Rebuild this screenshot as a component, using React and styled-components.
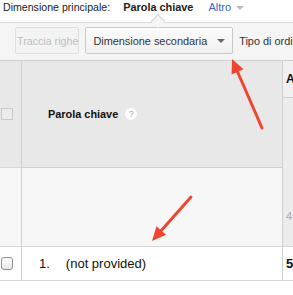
import React from "react";
import styled, { createGlobalStyle } from "styled-components";

const Global = createGlobalStyle`
  html, body { margin: 0; padding: 0; background: #fff; }
  body { width: 293px; height: 295px; overflow: hidden; font-family: "Liberation Sans", Arial, sans-serif; color: #222; }
`;

const Page = styled.div`
  position: relative;
  width: 293px;
  height: 295px;
  overflow: hidden;
`;

const Nav = styled.div`
  height: 22px;
  display: flex;
  align-items: flex-start;
  padding: 1px 0 0 3px;
  box-sizing: border-box;
  font-size: 10.6px;
  line-height: 13px;
  white-space: nowrap;
`;

const NavLabel = styled.span`
  color: #222;
`;

const NavCurrent = styled.span`
  position: relative;
  margin-left: 13px;
  font-weight: bold;
  font-size: 10.9px;
  color: #222;
`;

const Notch = styled.span`
  position: absolute;
  left: 30px;
  top: 15px;
  width: 9px;
  height: 9px;
  background: #f5f5f5;
  border-left: 1px solid #d4d4d4;
  border-top: 1px solid #d4d4d4;
  transform: rotate(45deg);
`;

const NavMore = styled.span`
  margin-left: 15px;
  color: #3366cc;
  font-size: 11px;
  display: flex;
  align-items: center;
  gap: 5px;
`;

const Caret = styled.span`
  display: inline-block;
  width: 0;
  height: 0;
  border-left: 4px solid transparent;
  border-right: 4px solid transparent;
  border-top: 4px solid ${(p) => p.$color || "#bbb"};
`;

const Toolbar = styled.div`
  height: 39px;
  box-sizing: border-box;
  border-top: 1px solid #dcdcdc;
  border-bottom: 1px solid #cfcfcf;
  background: #f5f5f5;
  display: flex;
  align-items: flex-start;
  padding: 4px 0 0 15px;
  gap: 6px;
  white-space: nowrap;
  font-size: 10.9px;
`;

const Button = styled.div`
  height: 27px;
  box-sizing: border-box;
  border: 1px solid ${(p) => (p.$disabled ? "#dedede" : "#c8c8c8")};
  border-radius: 2px;
  background: ${(p) => (p.$disabled ? "#f3f3f3" : "linear-gradient(#fbfbfb, #f1f1f1)")};
  color: ${(p) => (p.$disabled ? "#bdbdbd" : "#333")};
  font-size: ${(p) => (p.$disabled ? "10.7px" : "10.9px")};
  display: flex;
  align-items: center;
  padding: 0 ${(p) => (p.$disabled ? "0" : "7px")} 0 ${(p) => (p.$disabled ? "1px" : "7px")};
  gap: 10px;
  flex-shrink: 0;
`;

const ToolText = styled.div`
  height: 27px;
  display: flex;
  align-items: center;
  color: #333;
`;

const Table = styled.div`
  display: grid;
  grid-template-columns: 22px 261px 1fr;
`;

const Cell = styled.div`
  box-sizing: border-box;
  border-right: ${(p) => (p.$last ? "none" : "1px solid #d0d0d0")};
  border-bottom: 1px solid ${(p) => p.$line || "#d6d6d6"};
  background: ${(p) => p.$bg || "#fff"};
  height: ${(p) => p.$h}px;
  display: flex;
  align-items: ${(p) => p.$align || "center"};
  padding-left: ${(p) => p.$pad || 0}px;
  white-space: nowrap;
  overflow: hidden;
`;

const Stack = styled.div`
  display: flex;
  flex-direction: column;
  height: ${(p) => p.$h}px;
`;

const HeaderBox = styled.span`
  width: 12px;
  height: 12px;
  margin-left: 1px;
  box-sizing: border-box;
  border: 1px solid #c9c9c9;
  background: #ececec;
`;

const RowBox = styled.span`
  width: 12px;
  height: 13px;
  margin-left: 1px;
  box-sizing: border-box;
  border: 1px solid #8f8f8f;
  border-radius: 3px;
  background: linear-gradient(#ffffff, #e8e8e8);
`;

const HeadTitle = styled.span`
  font-weight: bold;
  font-size: 10.9px;
  color: #111;
`;

const Help = styled.span`
  width: 12px;
  height: 12px;
  border-radius: 50%;
  background: #fff;
  color: #aaa;
  font-size: 9px;
  line-height: 12px;
  text-align: center;
  margin-left: 7px;
`;

const RowText = styled.span`
  font-size: 13px;
  color: #111;
  margin-right: ${(p) => p.$gap || 0}px;
`;

const MetricHead = styled.span`
  font-weight: bold;
  font-size: 12px;
  color: #111;
  padding-left: 3px;
`;

const Faint = styled.span`
  font-size: 11px;
  color: #aaa;
  padding-left: 3px;
  margin-top: 42px;
`;

const Arrows = styled.svg`
  position: absolute;
  left: 0;
  top: 0;
  pointer-events: none;
`;

function Arrow({ x1, y1, x2, y2 }) {
  const dx = x2 - x1;
  const dy = y2 - y1;
  const len = Math.hypot(dx, dy);
  const ux = dx / len;
  const uy = dy / len;
  const hl = 14;
  const hw = 6.5;
  const bx = x2 - ux * hl;
  const by = y2 - uy * hl;
  const px = -uy;
  const py = ux;
  const pts = `${x2},${y2} ${bx + px * hw},${by + py * hw} ${bx - px * hw},${by - py * hw}`;
  return (
    <g>
      <line x1={x1} y1={y1} x2={bx + ux * 2} y2={by + uy * 2} stroke="#ef4631" strokeWidth="3" strokeLinecap="round" />
      <polygon points={pts} fill="#ef4631" />
    </g>
  );
}

export default function App() {
  return (
    <Page>
      <Global />
      <Nav>
        <NavLabel>Dimensione principale:</NavLabel>
        <NavCurrent>
          Parola chiave
          <Notch />
        </NavCurrent>
        <NavMore>
          Altro <Caret $color="#bbb" />
        </NavMore>
      </Nav>
      <Toolbar>
        <Button $disabled>Traccia righe</Button>
        <Button>
          Dimensione secondaria <Caret $color="#666" />
        </Button>
        <ToolText>Tipo di ordinamento</ToolText>
      </Toolbar>
      <Table>
        <Cell $h={107} $bg="#e8e8e8">
          <HeaderBox />
        </Cell>
        <Cell $h={107} $bg="#e8e8e8" $pad={26} $line="#d0d0d0">
          <HeadTitle>Parola chiave</HeadTitle>
          <Help>?</Help>
        </Cell>
        <Stack $h={107}>
          <Cell $h={37} $last $bg="#f0f0f0" $align="center" $line="#d0d0d0">
            <MetricHead>Acquisizione</MetricHead>
          </Cell>
          <Cell $h={70} $last $bg="#ececec" $line="#ececec" />
        </Stack>

        <Cell $h={79} $bg="#f7f7f7" />
        <Cell $h={79} $bg="#f7f7f7" />
        <Cell $h={79} $last $bg="#ececec" $align="flex-start">
          <Faint>4</Faint>
        </Cell>

        <Cell $h={34}>
          <RowBox />
        </Cell>
        <Cell $h={34} $pad={17}>
          <RowText $gap={16}>1.</RowText>
          <RowText>(not provided)</RowText>
        </Cell>
        <Cell $h={34} $last>
          <MetricHead style={{ fontSize: 13 }}>5</MetricHead>
        </Cell>
      </Table>
      <Arrows width="293" height="295" viewBox="0 0 293 295">
        <Arrow x1={262} y1={128} x2={232} y2={59} />
        <Arrow x1={191} y1={197} x2={152} y2={241} />
      </Arrows>
    </Page>
  );
}
